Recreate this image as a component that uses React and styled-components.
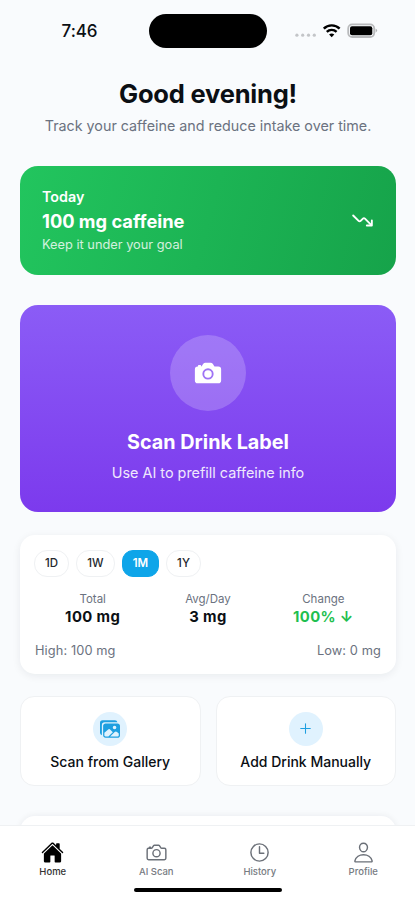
import React, { useState } from "react";
import styled, { createGlobalStyle, ThemeProvider } from "styled-components";
import {
  IoAdd,
  IoCamera,
  IoCameraOutline,
  IoHome,
  IoImages,
  IoPersonOutline,
  IoTimeOutline,
  IoTrendingDown,
} from "react-icons/io5";

const theme = {
  background: "#f9fbfd",
  text: "#0b0f14",
  muted: "#6b7280",
  border: "#eff1f3",
  blue: "#0ea5e9",
  green: "#1fbf4f",
};

const GlobalStyle = createGlobalStyle`
  * {
    box-sizing: border-box;
  }

  body {
    margin: 0;
    background: #f9fbfd;
    font-family: Inter, "Liberation Sans", sans-serif;
    overflow: hidden;
  }

  button {
    font-family: inherit;
    margin: 0;
    padding: 0;
    cursor: pointer;
  }
`;

const Screen = styled.div`
  display: flex;
  flex-direction: column;
  width: 415px;
  height: 900px;
  overflow: hidden;
  color: ${(props) => props.theme.text};
  background: ${(props) => props.theme.background};
  white-space: nowrap;
`;

const StyledStatusBar = styled.div`
  display: grid;
  grid-template-columns: 149px 118px 1fr;
  align-items: center;
  flex: none;
  height: 62px;

  .time {
    padding-left: 10px;
    text-align: center;
    font-size: 17px;
    font-weight: 500;
    letter-spacing: -0.1px;
  }

  .island {
    height: 34px;
    border-radius: 17px;
    background: #000;
  }

  .indicators {
    display: flex;
    align-items: center;
    padding-left: 28px;
  }
`;

const Content = styled.main`
  flex: 1;
  min-height: 0;
  padding: 14px 19px 0 20px;
  overflow: hidden;
`;

const Header = styled.header`
  text-align: center;
  margin-bottom: 28.5px;

  h1 {
    margin: 0;
    font-size: 25.5px;
    line-height: 36px;
    font-weight: 700;
    letter-spacing: -0.2px;
  }

  p {
    margin: 2px 0 0;
    font-size: 14.3px;
    line-height: 23px;
    color: ${(props) => props.theme.muted};
  }
`;

const TodayCard = styled.section`
  display: flex;
  align-items: center;
  justify-content: space-between;
  height: 109px;
  padding: 0 22px;
  border-radius: 18px;
  color: #fff;
  background: linear-gradient(105deg, #22c55e, #16a34a);

  .label {
    font-size: 14.3px;
    line-height: 22px;
    font-weight: 600;
  }

  .amount {
    font-size: 18.3px;
    line-height: 26px;
    font-weight: 700;
  }

  .hint {
    padding-top: 1px;
    font-size: 12.8px;
    line-height: 20px;
    opacity: 0.8;
  }

  svg path {
    stroke-width: 42px;
  }
`;

const ScanCard = styled.section`
  display: flex;
  flex-direction: column;
  align-items: center;
  height: 207px;
  margin-top: 30px;
  padding-top: 30px;
  border-radius: 18px;
  color: #fff;
  background: linear-gradient(#8b5cf6, #7c3aed);

  h2 {
    margin: 17px 0 0;
    font-size: 19.8px;
    line-height: 28px;
    font-weight: 700;
  }

  p {
    margin: 7px 0 0;
    font-size: 14.4px;
    line-height: 20px;
    opacity: 0.88;
  }
`;

const ScanIcon = styled.div`
  display: flex;
  align-items: center;
  justify-content: center;
  width: 76px;
  height: 76px;
  border-radius: 50%;
  background: rgba(255, 255, 255, 0.2);
`;

const StatsCard = styled.section`
  height: 139px;
  margin-top: 23px;
  padding: 15px 15px 0;
  border-radius: 15px;
  background: #fff;
  box-shadow: 0 2px 9px rgba(15, 23, 42, 0.07);
`;

const Ranges = styled.div`
  display: flex;
  gap: 7px;
  margin-left: -1px;
`;

const RangeButton = styled.button`
  width: ${(props) => props.$width}px;
  height: 27px;
  border: 1px solid
    ${(props) => (props.$active ? props.theme.blue : props.theme.border)};
  border-radius: ${(props) => (props.$active ? 11 : 13)}px;
  font-size: 11.5px;
  font-weight: ${(props) => (props.$active ? 600 : 500)};
  color: ${(props) => (props.$active ? "#fff" : "#23272d")};
  background: ${(props) => (props.$active ? props.theme.blue : "#fff")};
`;

const Stats = styled.div`
  display: grid;
  grid-template-columns: repeat(3, 1fr);
  margin-top: 14px;
  text-align: center;
`;

const Stat = styled.div`
  .label {
    font-size: 11.5px;
    line-height: 17px;
    color: ${(props) => props.theme.muted};
  }

  .value {
    font-size: 14.8px;
    line-height: 18px;
    font-weight: 700;
    letter-spacing: 0.4px;
    color: ${(props) => (props.$positive ? props.theme.green : "inherit")};
  }
`;

const Extremes = styled.div`
  display: flex;
  justify-content: space-between;
  margin-top: 16px;
  font-size: 12.8px;
  line-height: 18px;
  letter-spacing: 0.1px;
  color: ${(props) => props.theme.muted};
`;

const Actions = styled.div`
  display: grid;
  grid-template-columns: 1fr 1fr;
  gap: 15px;
  margin-top: 22px;
`;

const ActionButton = styled.button`
  display: flex;
  flex-direction: column;
  align-items: center;
  height: 90px;
  padding-top: 15px;
  border: 1px solid ${(props) => props.theme.border};
  border-radius: 14px;
  background: #fff;
  font-size: 14px;
  line-height: 20px;
  font-weight: 500;
  color: ${(props) => props.theme.text};

  .icon {
    display: flex;
    align-items: center;
    justify-content: center;
    width: 34px;
    height: 34px;
    margin-bottom: 6px;
    border-radius: 50%;
    color: #1e9fe0;
    background: #e0f2fe;
  }
`;

const NextCard = styled.section`
  height: 80px;
  margin-top: 30px;
  border-radius: 15px;
  background: #fff;
  box-shadow: 0 0 7px rgba(15, 23, 42, 0.07);
`;

const StyledTabBar = styled.nav`
  flex: none;
  display: flex;
  flex-direction: column;
  align-items: center;
  height: 75px;
  border-top: 1px solid ${(props) => props.theme.border};
  background: #fff;

  .tabs {
    display: grid;
    grid-template-columns: repeat(4, 1fr);
    width: 100%;
    height: 62px;
    padding: 15px 0 0 1px;
  }

  .home-indicator {
    width: 148px;
    height: 4px;
    border-radius: 3px;
    background: #000;
  }
`;

const Tab = styled.button`
  display: flex;
  flex-direction: column;
  align-items: center;
  height: 37px;
  border: 0;
  background: none;
  font-size: 9.5px;
  line-height: 12px;
  font-weight: 500;
  color: ${(props) => (props.$active ? "#333" : "#777b82")};

  svg {
    display: block;
    margin-bottom: 2px;
    color: ${(props) => (props.$active ? "#000" : "#6b7078")};
  }
`;

const ranges = [
  { name: "1D", width: 35 },
  { name: "1W", width: 39 },
  { name: "1M", width: 37 },
  { name: "1Y", width: 35 },
];

const tabs = [
  { name: "Home", Icon: IoHome },
  { name: "AI Scan", Icon: IoCameraOutline },
  { name: "History", Icon: IoTimeOutline },
  { name: "Profile", Icon: IoPersonOutline },
];

function StatusBar() {
  return (
    <StyledStatusBar>
      <div className='time'>7:46</div>
      <div className='island' />
      <div className='indicators'>
        <svg width='83' height='20' viewBox='0 0 83 20'>
          <g fill='#c3c5c8'>
            <circle cx='1.9' cy='14.2' r='1.6' />
            <circle cx='7.7' cy='14.2' r='1.6' />
            <circle cx='13.5' cy='14.2' r='1.6' />
            <circle cx='19.3' cy='14.2' r='1.6' />
          </g>
          <g fill='none' stroke='#000' strokeWidth='2.4'>
            <path d='M28.8 7.7C33 3.3 40.4 3.3 44.6 7.7' />
            <path d='M31.8 10.8C34.5 8.2 38.9 8.2 41.6 10.8' />
          </g>
          <path d='M36.7 16.2L34.1 13.5Q36.7 11.3 39.3 13.5Z' fill='#000' />
          <rect
            x='53.2'
            y='3.4'
            width='26'
            height='12.6'
            rx='4'
            fill='none'
            stroke='#b9babc'
            strokeWidth='1.8'
          />
          <rect x='55' y='5.2' width='22.3' height='9' rx='2' fill='#000' />
          <path d='M80.6 7.4Q83.6 9.6 80.6 11.8Z' fill='#b0b1b3' />
        </svg>
      </div>
    </StyledStatusBar>
  );
}

function TabBar() {
  const [active, setActive] = useState("Home");

  return (
    <StyledTabBar>
      <div className='tabs'>
        {tabs.map(({ name, Icon }) => (
          <Tab
            key={name}
            $active={active === name}
            onClick={() => setActive(name)}
          >
            <Icon size={23} />
            {name}
          </Tab>
        ))}
      </div>
      <div className='home-indicator' />
    </StyledTabBar>
  );
}

function App() {
  const [range, setRange] = useState("1M");

  return (
    <ThemeProvider theme={theme}>
      <GlobalStyle />
      <Screen>
        <StatusBar />
        <Content>
          <Header>
            <h1>Good evening!</h1>
            <p>Track your caffeine and reduce intake over time.</p>
          </Header>
          <TodayCard>
            <div>
              <div className='label'>Today</div>
              <div className='amount'>100 mg caffeine</div>
              <div className='hint'>Keep it under your goal</div>
            </div>
            <IoTrendingDown size={23} />
          </TodayCard>
          <ScanCard>
            <ScanIcon>
              <IoCamera size={30} />
            </ScanIcon>
            <h2>Scan Drink Label</h2>
            <p>Use AI to prefill caffeine info</p>
          </ScanCard>
          <StatsCard>
            <Ranges>
              {ranges.map(({ name, width }) => (
                <RangeButton
                  key={name}
                  $width={width}
                  $active={range === name}
                  onClick={() => setRange(name)}
                >
                  {name}
                </RangeButton>
              ))}
            </Ranges>
            <Stats>
              <Stat>
                <div className='label'>Total</div>
                <div className='value'>100 mg</div>
              </Stat>
              <Stat>
                <div className='label'>Avg/Day</div>
                <div className='value'>3 mg</div>
              </Stat>
              <Stat $positive>
                <div className='label'>Change</div>
                <div className='value'>100% ↓</div>
              </Stat>
            </Stats>
            <Extremes>
              <span>High: 100 mg</span>
              <span>Low: 0 mg</span>
            </Extremes>
          </StatsCard>
          <Actions>
            <ActionButton>
              <span className='icon'>
                <IoImages size={20} />
              </span>
              Scan from Gallery
            </ActionButton>
            <ActionButton>
              <span className='icon'>
                <IoAdd size={17} />
              </span>
              Add Drink Manually
            </ActionButton>
          </Actions>
          <NextCard />
        </Content>
        <TabBar />
      </Screen>
    </ThemeProvider>
  );
}

export default App;
